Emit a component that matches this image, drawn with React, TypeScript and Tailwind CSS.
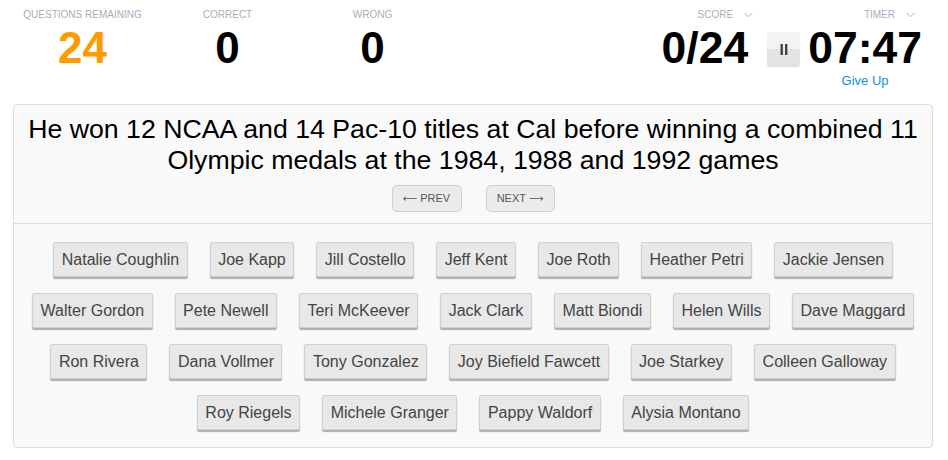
import React from "react";

const rows: string[][] = [
  ["Natalie Coughlin", "Joe Kapp", "Jill Costello", "Jeff Kent", "Joe Roth", "Heather Petri", "Jackie Jensen"],
  ["Walter Gordon", "Pete Newell", "Teri McKeever", "Jack Clark", "Matt Biondi", "Helen Wills", "Dave Maggard"],
  ["Ron Rivera", "Dana Vollmer", "Tony Gonzalez", "Joy Biefield Fawcett", "Joe Starkey", "Colleen Galloway"],
  ["Roy Riegels", "Michele Granger", "Pappy Waldorf", "Alysia Montano"],
];

function Chevron() {
  return (
    <svg width="9" height="6" viewBox="0 0 9 6" className="ml-[11px]">
      <polyline points="0.5,0.8 4.5,4.8 8.5,0.8" fill="none" stroke="#aab1bd" strokeWidth="1" />
    </svg>
  );
}

function Stat({ label, value, orange }: { label: string; value: string; orange?: boolean }) {
  return (
    <div className="w-[145px] flex flex-col items-center">
      <div className="text-[10px] leading-[12px] text-[#a7aebb] uppercase">{label}</div>
      <div className={`mt-[5px] text-[44px] leading-[44px] font-bold ${orange ? "text-[#ff9a00]" : "text-black"}`}>{value}</div>
    </div>
  );
}

export default function App() {
  return (
    <div className="w-[948px] h-[460px] bg-white overflow-hidden" style={{ fontFamily: '"Liberation Sans", Arial, sans-serif' }}>
      <div className="h-[104px] flex justify-between pt-[9px] pl-[10px] pr-[26px]">
        <div className="flex">
          <Stat label="Questions Remaining" value="24" orange />
          <Stat label="Correct" value="0" />
          <Stat label="Wrong" value="0" />
        </div>
        <div className="flex items-start">
          <div className="flex flex-col items-end">
            <div className="flex items-center h-[12px] text-[10px] leading-[12px] text-[#a7aebb]">
              SCORE
              <Chevron />
            </div>
            <div className="mt-[5px] mr-[5px] text-[44.5px] leading-[44px] font-bold text-black">0/24</div>
          </div>
          <button className="ml-[14px] mt-[23px] w-[33px] h-[34px] rounded-[3px] bg-[linear-gradient(#f3f3f3_50%,#e3e3e3_50%)] flex items-center justify-center shadow-[0_1px_1px_rgba(0,0,0,0.15)]">
            <svg width="8" height="11" viewBox="0 0 8 11">
              <rect x="0.5" y="0" width="2.4" height="11" fill="#444" />
              <rect x="5" y="0" width="2.4" height="11" fill="#444" />
            </svg>
          </button>
          <div className="ml-[8px] flex flex-col items-end">
            <div className="mr-[7px] flex items-center h-[12px] text-[10px] leading-[12px] text-[#a7aebb]">
              TIMER
              <Chevron />
            </div>
            <div className="mt-[5px] text-[44.5px] leading-[44px] font-bold text-black">07:47</div>
            <div className="self-center mt-[3px] text-[13px] leading-[15px] text-[#1590d0]">Give Up</div>
          </div>
        </div>
      </div>

      <div className="ml-[13px] w-[920px] h-[344px] border border-[#dcdcdc] rounded-[4px] bg-[#f9f9f9]">
        <div className="pt-[9px] pb-[11px] border-b border-[#dcdcdc] flex flex-col items-center">
          <div className="text-[26.7px] leading-[31px] text-black text-center px-[6px]">
            He won 12 NCAA and 14 Pac-10 titles at Cal before winning a combined 11 Olympic medals at the 1984, 1988 and 1992 games
          </div>
          <div className="mt-[9px] flex gap-[24px]">
            <button className="w-[70px] h-[27px] rounded-[5px] border border-[#cfcfcf] bg-[#ebebeb] text-[11px] text-[#555] flex items-center justify-center">
              <span style={{ fontFamily: '"DejaVu Sans", sans-serif' }} className="mr-[3px] text-[10px]">⟵</span>PREV
            </button>
            <button className="w-[69px] h-[27px] rounded-[5px] border border-[#cfcfcf] bg-[#ebebeb] text-[11px] text-[#555] flex items-center justify-center">
              NEXT<span style={{ fontFamily: '"DejaVu Sans", sans-serif' }} className="ml-[3px] text-[10px]">⟶</span>
            </button>
          </div>
        </div>
        <div className="pt-[10px] px-[5px] flex flex-col items-center">
          {rows.map((r, i) => (
            <div key={i} className="flex justify-center">
              {r.map((n) => (
                <button
                  key={n}
                  className="mx-[11px] my-[8px] h-[35px] px-[7.5px] rounded-[2px] border border-[#d0d0d0] bg-[#e8e8e8] text-[16px] text-[#444] shadow-[0_2px_1px_#aeaeae] whitespace-nowrap"
                >
                  {n}
                </button>
              ))}
            </div>
          ))}
        </div>
      </div>
    </div>
  );
}
